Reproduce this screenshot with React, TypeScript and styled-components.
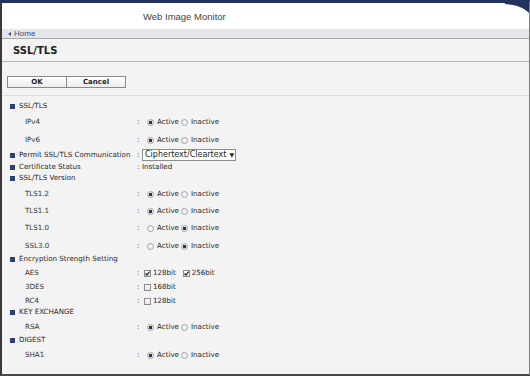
import React from "react";
import styled, { createGlobalStyle } from "styled-components";

const GlobalStyle = createGlobalStyle`
  html, body { margin: 0; padding: 0; background: #ffffff; }
  * { box-sizing: border-box; }
`;

const Frame = styled.div`
  position: relative;
  width: 530px;
  height: 376px;
  overflow: hidden;
  background: #f3f3f3;
  border-top: 3px solid #22325f;
  border-left: 2px solid #3a3a3a;
  border-right: 1px solid #7a7a7a;
  border-bottom: 2px solid #4a4a4a;
  font-family: "DejaVu Sans", Verdana, sans-serif;
  color: #262626;
  display: flex;
  flex-direction: column;
`;

const CornerMark = styled.svg`
  position: absolute;
  top: 0;
  right: 0;
`;

const Header = styled.header`
  height: 26px;
  background: #ffffff;
  display: flex;
  align-items: center;
  padding-left: 141px;
  font-family: "Liberation Sans", Arial, sans-serif;
  font-size: 9.5px;
  color: #444;
`;

const HomeBar = styled.nav`
  height: 10px;
  background: #e6e6ea;
  border-bottom: 1px solid #a8a8a8;
  display: flex;
  align-items: center;
  padding-left: 6px;
  font-family: "Liberation Sans", Arial, sans-serif;
  font-size: 8px;
  color: #2b4f92;
  gap: 3px;
`;

const HomeArrow = styled.span`
  width: 0;
  height: 0;
  border-top: 2px solid transparent;
  border-bottom: 2px solid transparent;
  border-right: 3px solid #2b4f92;
`;

const TitleBar = styled.div`
  height: 23px;
  border-bottom: 1px solid #b4b4b4;
  display: flex;
  align-items: center;
  padding-left: 11px;
  font-weight: bold;
  font-size: 10px;
  color: #1e1e1e;
`;

const ButtonBar = styled.div`
  height: 34px;
  border-bottom: 1px solid #dcdcdc;
  display: flex;
  align-items: flex-start;
  padding-top: 14px;
  padding-left: 5px;
`;

const Button = styled.button`
  width: 60px;
  height: 12px;
  margin: 0 -1px 0 0;
  padding: 0;
  border: 1px solid #8a8a8a;
  background: linear-gradient(#ffffff, #ececec);
  font-family: "DejaVu Sans", Verdana, sans-serif;
  font-weight: bold;
  font-size: 7px;
  color: #1e1e1e;
  line-height: 10px;
`;

const Content = styled.div`
  padding-top: 4px;
  display: flex;
  flex-direction: column;
`;

const Row = styled.div<{ $h: number }>`
  height: ${(p) => p.$h}px;
  display: flex;
  align-items: flex-start;
  font-size: 7.1px;
  line-height: 12px;
`;

const LabelCell = styled.div<{ $section?: boolean }>`
  width: 135px;
  display: flex;
  align-items: center;
  height: 12px;
  padding-left: ${(p) => (p.$section ? 8 : 23)}px;
  color: ${(p) => (p.$section ? "#262626" : "#333")};
  white-space: nowrap;
`;

const Marker = styled.span`
  width: 5px;
  height: 5px;
  background: #2c3f73;
  margin-right: 4px;
  flex: none;
`;

const Colon = styled.span<{ $w: number }>`
  width: ${(p) => p.$w}px;
  flex: none;
`;

const Value = styled.div`
  display: flex;
  align-items: center;
  height: 12px;
`;

const RadioDot = styled.span<{ $on?: boolean }>`
  width: 7px;
  height: 7px;
  border-radius: 50%;
  border: 1px solid #a5a5a5;
  background: radial-gradient(circle, ${(p) => (p.$on ? "#333 0, #333 1.4px, #e8e8e8 1.9px" : "#fafafa 0")}, #e6e6e6 100%);
  margin-right: 3px;
  flex: none;
`;

const OptText = styled.span<{ $gap?: number }>`
  margin-right: ${(p) => p.$gap ?? 2}px;
`;

const CheckBox = styled.span`
  width: 7px;
  height: 7px;
  border: 1px solid #8c8c8c;
  background: linear-gradient(#ffffff, #e4e4e4);
  margin-right: 2px;
  flex: none;
  display: flex;
  align-items: center;
  justify-content: center;
`;

const Select = styled.div`
  width: 94px;
  height: 12px;
  border: 1px solid #8d8d8d;
  background: #ffffff;
  display: flex;
  align-items: center;
  padding-left: 2px;
  font-size: 8px;
  color: #1e1e1e;
  gap: 3px;
`;

const Arrow = styled.span`
  font-size: 6px;
`;

const Check = () => (
  <svg width="5" height="5" viewBox="0 0 5 5">
    <path d="M0.5 2.5 L2 4.1 L4.6 0.5" stroke="#222" strokeWidth="1.2" fill="none" />
  </svg>
);

type Kind =
  | { t: "section"; label: string; h: number }
  | { t: "radio"; label: string; h: number; active: boolean }
  | { t: "check"; label: string; h: number; opts: { text: string; on: boolean }[] };

const rows: Kind[] = [
  { t: "section", label: "SSL/TLS", h: 16 },
  { t: "radio", label: "IPv4", h: 18, active: true },
  { t: "radio", label: "IPv6", h: 15, active: true },
];

const rows2: Kind[] = [
  { t: "section", label: "SSL/TLS Version", h: 16 },
  { t: "radio", label: "TLS1.2", h: 17, active: true },
  { t: "radio", label: "TLS1.1", h: 17, active: true },
  { t: "radio", label: "TLS1.0", h: 18, active: false },
  { t: "radio", label: "SSL3.0", h: 13, active: false },
  { t: "section", label: "Encryption Strength Setting", h: 14 },
  { t: "check", label: "AES", h: 14, opts: [{ text: "128bit", on: true }, { text: "256bit", on: true }] },
  { t: "check", label: "3DES", h: 14, opts: [{ text: "168bit", on: false }] },
  { t: "check", label: "RC4", h: 11, opts: [{ text: "128bit", on: false }] },
  { t: "section", label: "KEY EXCHANGE", h: 15 },
  { t: "radio", label: "RSA", h: 13, active: true },
  { t: "section", label: "DIGEST", h: 15 },
  { t: "radio", label: "SHA1", h: 15, active: true },
];

const renderRow = (r: Kind, i: number) => {
  if (r.t === "section") {
    return (
      <Row key={i} $h={r.h}>
        <LabelCell $section>
          <Marker />
          {r.label}
        </LabelCell>
      </Row>
    );
  }
  if (r.t === "radio") {
    return (
      <Row key={i} $h={r.h}>
        <LabelCell>{r.label}</LabelCell>
        <Colon $w={10}>:</Colon>
        <Value>
          <RadioDot $on={r.active} />
          <OptText>Active</OptText>
          <RadioDot $on={!r.active} />
          <OptText>Inactive</OptText>
        </Value>
      </Row>
    );
  }
  return (
    <Row key={i} $h={r.h}>
      <LabelCell>{r.label}</LabelCell>
      <Colon $w={7}>:</Colon>
      <Value>
        {r.opts.map((o, j) => (
          <React.Fragment key={j}>
            <CheckBox>{o.on && <Check />}</CheckBox>
            <OptText $gap={7}>{o.text}</OptText>
          </React.Fragment>
        ))}
      </Value>
    </Row>
  );
};

export default function App() {
  return (
    <>
      <GlobalStyle />
      <Frame>
        <CornerMark width="24" height="10" viewBox="0 0 24 10">
          <path d="M0 0 H24 V10 C18 4 10 2 0 1 Z" fill="#22325f" />
        </CornerMark>
        <Header>Web Image Monitor</Header>
        <HomeBar>
          <HomeArrow />
          Home
        </HomeBar>
        <TitleBar>SSL/TLS</TitleBar>
        <ButtonBar>
          <Button>OK</Button>
          <Button>Cancel</Button>
        </ButtonBar>
        <Content>
          {rows.map(renderRow)}
          <Row $h={12}>
            <LabelCell $section>
              <Marker />
              Permit SSL/TLS Communication
            </LabelCell>
            <Colon $w={5}>:</Colon>
            <Select>
              Ciphertext/Cleartext
              <Arrow>▼</Arrow>
            </Select>
          </Row>
          <Row $h={11}>
            <LabelCell $section>
              <Marker />
              Certificate Status
            </LabelCell>
            <Colon $w={5}>:</Colon>
            <Value>Installed</Value>
          </Row>
          {rows2.map((r, i) => renderRow(r, i + 10))}
        </Content>
      </Frame>
    </>
  );
}
